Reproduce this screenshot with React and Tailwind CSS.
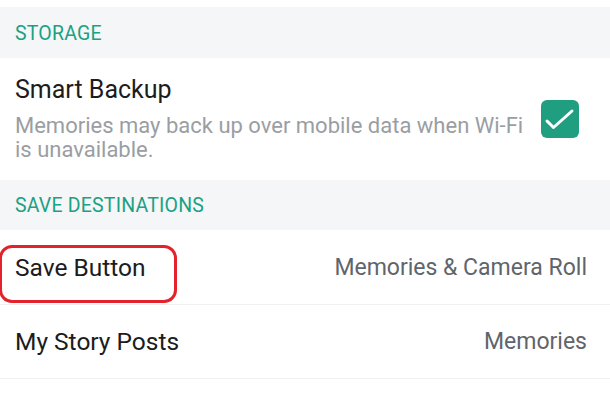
import React from "react";

export default function App() {
  return (
    <div className="relative w-[610px] h-[407px] bg-white overflow-hidden" style={{ fontFamily: "Roboto, 'Noto Sans', sans-serif" }}>
      <div className="h-[7px]" />
      <div className="h-[51px] bg-[#f5f6f8] flex items-center pl-[15px] pt-[3px] text-[19.5px] text-[#1ba184] tracking-[0.2px]">STORAGE</div>
      <div className="h-[122px] flex items-start pl-[15px] pr-[31px]">
        <div className="flex-1 pt-[18px]">
          <div className="text-[25px] leading-[28px] text-[#1c1c1c]">Smart Backup</div>
          <div className="mt-[10px] text-[22px] leading-[24px] text-[#9a9ea3] w-[515px]">Memories may back up over mobile data when Wi-Fi is unavailable.</div>
        </div>
        <div className="w-[38px] h-[38px] rounded-[6px] bg-[#1f9f80] flex items-center justify-center mt-[42px]">
          <svg width="38" height="38" viewBox="0 0 38 38">
            <path d="M6 21 L12.5 27.5 L31 11" fill="none" stroke="white" strokeWidth="3" strokeLinecap="round" strokeLinejoin="round" />
          </svg>
        </div>
      </div>
      <div className="h-[50px] bg-[#f5f6f8] flex items-center pl-[15px] pt-[2px] text-[19.5px] text-[#1ba184] tracking-[0.2px]">SAVE DESTINATIONS</div>
      <div className="h-[75px] flex items-center justify-between pl-[15px] pr-[23px] pt-[2px] border-b border-[#f0f1f3]">
        <span className="text-[24.5px] text-[#1c1c1c]">Save Button</span>
        <span className="text-[23px] text-[#5f656c]">Memories &amp; Camera Roll</span>
      </div>
      <div className="h-[74px] flex items-center justify-between pl-[15px] pr-[23px] pt-[2px] border-b border-[#f0f1f3]">
        <span className="text-[24.5px] text-[#1c1c1c]">My Story Posts</span>
        <span className="text-[23px] text-[#5f656c]">Memories</span>
      </div>
      <div className="absolute left-[-1px] top-[245px] w-[178px] h-[58px] border-[3px] border-[#e3222b] rounded-[13px]" />
    </div>
  );
}
